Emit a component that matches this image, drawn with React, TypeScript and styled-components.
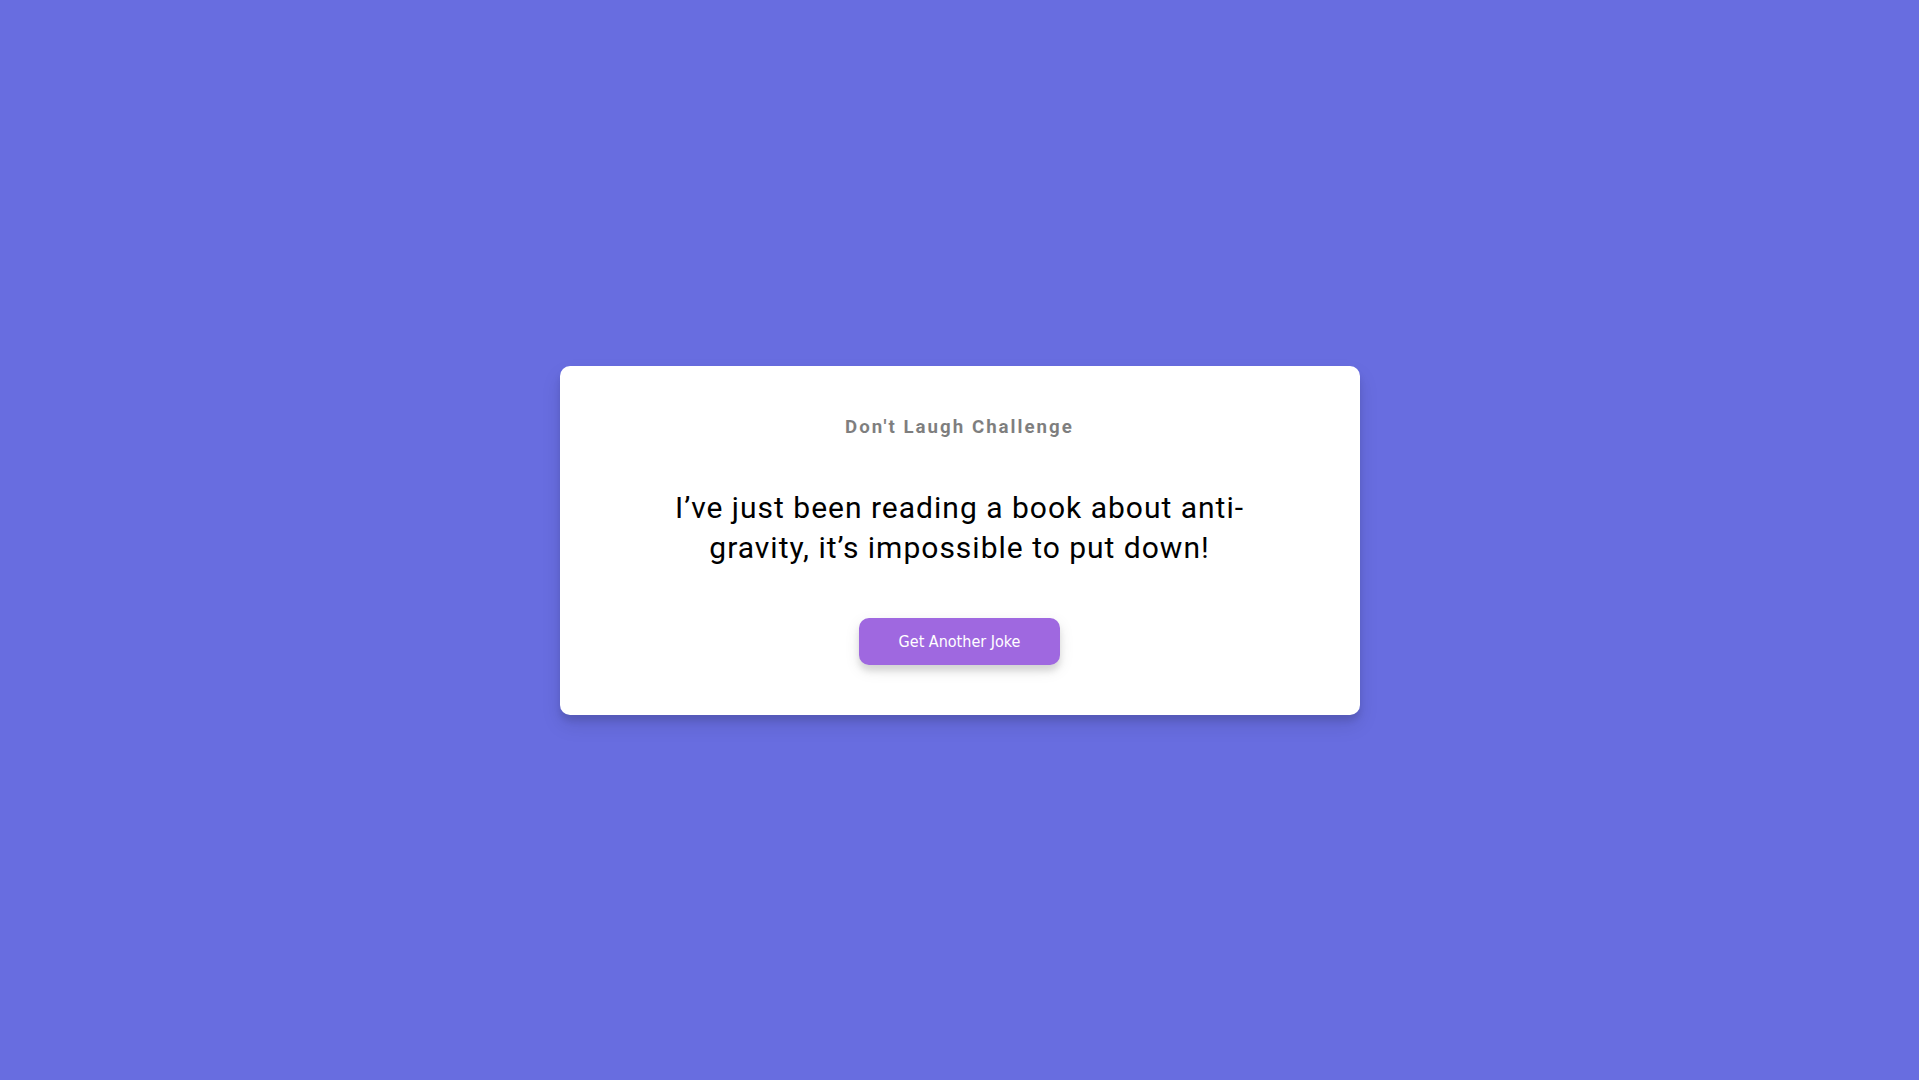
import React from "react";
import styled, { createGlobalStyle } from "styled-components";

const GlobalStyle = createGlobalStyle`
  * {
    box-sizing: border-box;
  }
  body {
    margin: 0;
    background-color: #686de0;
    font-family: Roboto, "Liberation Sans", sans-serif;
  }
`;

const Page = styled.main`
  display: flex;
  flex-direction: column;
  align-items: center;
  justify-content: center;
  height: 100vh;
  overflow: hidden;
  padding: 20px;
`;

const Card = styled.div`
  background-color: #fff;
  border-radius: 10px;
  box-shadow: 0 10px 20px rgba(0, 0, 0, 0.1), 0 6px 6px rgba(0, 0, 0, 0.1);
  padding: 50px 20px;
  text-align: center;
  max-width: 100%;
  width: 800px;
`;

const Title = styled.h3`
  margin: 0;
  font-size: 18.72px;
  font-weight: 700;
  color: #000;
  opacity: 0.5;
  letter-spacing: 2px;
`;

const Joke = styled.p`
  font-size: 30px;
  letter-spacing: 1px;
  line-height: 40px;
  margin: 50px auto;
  max-width: 600px;
  color: #000;
`;

const Button = styled.button`
  background-color: #9f68e0;
  color: #fff;
  border: 0;
  border-radius: 10px;
  box-shadow: 0 5px 15px rgba(0, 0, 0, 0.1), 0 6px 6px rgba(0, 0, 0, 0.1);
  padding: 14px 40px;
  font-family: "DejaVu Sans Condensed", "Liberation Sans", sans-serif;
  font-size: 16px;
  cursor: pointer;
`;

export default function App() {
  return (
    <>
      <GlobalStyle />
      <Page>
        <Card>
          <Title>Don't Laugh Challenge</Title>
          <Joke>I’ve just been reading a book about anti-gravity, it’s impossible to put down!</Joke>
          <Button>Get Another Joke</Button>
        </Card>
      </Page>
    </>
  );
}
